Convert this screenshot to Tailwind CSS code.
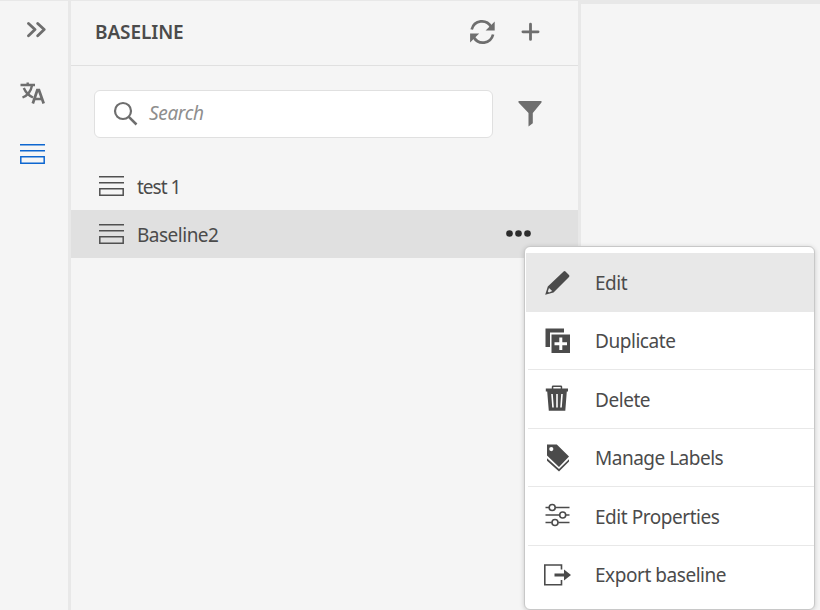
<!DOCTYPE html>
<html lang="en">
<head>
<meta charset="utf-8">
<title>Baseline</title>
<script src="https://cdn.jsdelivr.net/npm/@tailwindcss/browser@4"></script>
</head>
<body class="relative flex h-[610px] w-[820px] overflow-hidden bg-[#f5f5f5] font-['Noto_Sans','Open_Sans',sans-serif] text-[19px] text-[#4b4b4b]">
<nav class="flex w-[71px] shrink-0 flex-col border-t border-r-3 border-t-[#e8e8e8] border-r-[#e8e8e8] pt-[19px] pl-5">
  <svg class="ml-[6px] h-5 w-5" viewBox="0 0 20 20" fill="none" stroke="#6e6e6e" stroke-width="2.8" stroke-linecap="round" stroke-linejoin="round"><path d="M2.5 3.4 9 9.6 2.5 15.8M11.7 3.4 18.2 9.6 11.7 15.8"/></svg>
  <svg class="mt-[42px] h-6 w-[26px]" viewBox="0 0 26 24" fill="none" stroke="#6e6e6e" stroke-width="2.400"><path d="M.5 3H15M7.7.5V3M12 3.5C11 9 7.500 13.500 2.500 15.500M3.800 6C5.500 10 8.500 13.500 13 15.500"/><path d="M12.800 21.500 17.300 8.200H19L23.700 21.500M14 17H22.200" stroke-width="2.700"/></svg>
  <svg class="mt-[37px] h-[22px] w-[25px]" viewBox="0 0 25 22" fill="none" stroke="#0d66d0" stroke-width="1.5"><path d="M0 1.750H25M0 7.750H25M.8 13.750H24.200V20.200H.8Z"/></svg>
</nav>
<section class="flex w-[510px] shrink-0 flex-col border-t border-r-3 border-t-[#e8e8e8] border-r-[#e8e8e8]">
  <header class="flex h-[65px] items-center border-b border-[#e0e0e0] pr-[38px] pb-[3px] pl-6">
    <h1 class="flex-1 pt-[2px] text-[19px] font-semibold tracking-[-0.1px]">BASELINE</h1>
    <svg class="h-[26px] w-[26px]" viewBox="0 0 26 26" fill="none" stroke="#6e6e6e" stroke-width="2.700"><path d="M2.700 10.500C5.200.8 17.400 -.5 22.200 8M24.100 15.500C21.600 25.200 9.400 26.500 4.600 18"/><path d="M25.700 2.500V11.500H16.600ZM1.100 23.500V14.500H10.200Z" fill="#6e6e6e" stroke="none"/></svg>
    <svg class="ml-[25px] h-5 w-5" viewBox="0 0 20 20" fill="none" stroke="#6e6e6e" stroke-width="2.800" stroke-linecap="round"><path d="M2.900 9.800H18.100M10.500 2.200V17.400"/></svg>
  </header>
  <div class="mt-6 flex h-12 items-center pl-[23px]">
    <div class="flex h-12 w-[399px] items-center rounded-[6px] border border-[#e0e0e0] bg-white pl-[18px]">
      <svg class="h-[26px] w-[26px]" viewBox="0 0 26 26" fill="none" stroke="#6e6e6e" stroke-width="2.200"><circle cx="10" cy="10" r="8"/><path d="M15.800 15.800 23.500 23.500" stroke-width="2.500"/></svg>
      <span class="ml-[10px] pb-[2px] text-[#8e8e8e] italic tracking-[-0.350px]">Search</span>
    </div>
    <svg class="ml-[25px] h-[26px] w-6" viewBox="0 0 24 26" fill="#6e6e6e"><path d="M.5 0H23.500V1.500L14.800 12V22.300L10.500 25.500V12L.5 1.500Z"/></svg>
  </div>
  <ul class="mt-6">
    <li class="flex h-12 items-center pl-7">
      <svg class="h-[22px] w-[25px]" viewBox="0 0 25 22" fill="none" stroke="#505050" stroke-width="1.500"><path d="M0 1.750H25M0 7.750H25M.8 13.750H24.200V20.200H.8Z"/></svg>
      <span class="ml-[13px] pt-[2px] tracking-[-1px]">test 1</span>
    </li>
    <li class="flex h-12 items-center bg-[#e0e0e0] pr-[46px] pl-7">
      <svg class="h-[22px] w-[25px]" viewBox="0 0 25 22" fill="none" stroke="#505050" stroke-width="1.500"><path d="M0 1.750H25M0 7.750H25M.8 13.750H24.200V20.200H.8Z"/></svg>
      <span class="ml-[13px] flex-1 pt-[2px] tracking-[-0.500px]">Baseline2</span>
      <svg class="h-2 w-[26px]" viewBox="0 0 26 8" fill="#2c2c2c"><circle cx="3.500" cy="3.500" r="3.300"/><circle cx="12.500" cy="3.500" r="3.300"/><circle cx="21.500" cy="3.500" r="3.300"/></svg>
    </li>
  </ul>
</section>
<main class="flex-1 border-t-4 border-[#e8e8e8]"></main>
<div class="absolute top-[246px] left-[524px] flex h-[364px] w-[291px] flex-col rounded-[6px] border border-[#c8c8c8] bg-white pt-[6px] pl-px tracking-[-0.450px] shadow-[0_1px_5px_rgba(0,0,0,0.18)]">
  <div class="flex h-[59px] items-center bg-[#e8e8e8] pl-[17px]">
    <svg class="h-[30px] w-[30px]" viewBox="0 0 30 30"><path d="M2.200 26.700 4.800 18.600 20.600 3.400Q21.500 2.500 22.500 3.400L26 7Q26.900 8 26 8.900L10.500 24.400Z" fill="#4b4b4b"/><path d="M4.800 23.600 6 19.900 9.200 23.100 6 24.500Z" fill="#e8e8e8"/></svg>
    <span class="ml-[22px] pt-[2px]">Edit</span>
  </div>
  <div class="ml-[2px] flex h-[58px] items-center border-b border-[#e8e8e8] pl-[15px]">
    <svg class="h-[30px] w-[30px]" viewBox="0 0 30 30" fill="#4b4b4b"><path d="M2.500 2.500H21V6.500H7V21H2.500Z"/><path d="M8.500 8.500H27V27H8.500Z"/><path d="M17.800 11.500V24M11.500 17.800H24" stroke="#fff" stroke-width="3"/></svg>
    <span class="ml-[22px] pt-[2px]">Duplicate</span>
  </div>
  <div class="ml-[2px] flex h-[59px] items-center border-b border-[#e8e8e8] pl-[15px]">
    <svg class="h-[30px] w-[30px]" viewBox="0 0 30 30" fill="#4b4b4b"><path d="M2.800 4.500H8.800V2.500Q9 1.500 10 1.500H18Q19 1.500 19.200 2.500V4.500H25V7.500H23.800L22.300 26.800H5.800L4.200 7.500H2.800ZM10.300 4.500H17.700V3H10.300Z" fill-rule="evenodd"/><path d="M9 10 10 23.500M14 10V23.500M19 10 18 23.500" stroke="#fff" stroke-width="1.600" fill="none"/></svg>
    <span class="ml-[22px] pt-[2px]">Delete</span>
  </div>
  <div class="ml-[2px] flex h-[58px] items-center border-b border-[#e8e8e8] pl-[15px]">
    <svg class="h-[30px] w-[30px]" viewBox="0 0 30 30" fill="#4b4b4b"><path d="M4 1.500H13.800L26 13.600 16 24 4 12.500ZM8.300 4A2.100 2.100 0 1 0 8.300 8.200 2.100 2.100 0 1 0 8.300 4Z" fill-rule="evenodd"/><path d="M4 15.200V17.800L16 28.500 26 18.500V16.200L16 26Z"/></svg>
    <span class="ml-[22px] pt-[2px] tracking-[-0.500px]">Manage Labels</span>
  </div>
  <div class="ml-[2px] flex h-[59px] items-center border-b border-[#e8e8e8] pl-[15px]">
    <svg class="h-[30px] w-[30px]" viewBox="0 0 30 30" fill="none" stroke="#4b4b4b" stroke-width="1.600"><path d="M2.500 6.500H6M12.500 6.500H26.500M2.500 14H16.500M23 14H26.500M2.500 21.500H8.800M15.300 21.500H26.500"/><circle cx="9.200" cy="6.500" r="3"/><circle cx="19.700" cy="14" r="3"/><circle cx="12" cy="21.500" r="3"/></svg>
    <span class="ml-[22px] pt-[2px]">Edit Properties</span>
  </div>
  <div class="ml-[2px] flex h-[59px] items-center pl-[15px]">
    <svg class="h-[30px] w-[30px]" viewBox="0 0 30 30" fill="none" stroke="#4b4b4b" stroke-width="1.600"><path d="M18.500 8.500V4H1.800V23.800H18.500V19"/><path d="M11.500 12.500H21V8.500L28 14 21 19.500V15.500H11.500Z" fill="#4b4b4b" stroke="none"/></svg>
    <span class="ml-[22px]">Export baseline</span>
  </div>
</div>
</body>
</html>
